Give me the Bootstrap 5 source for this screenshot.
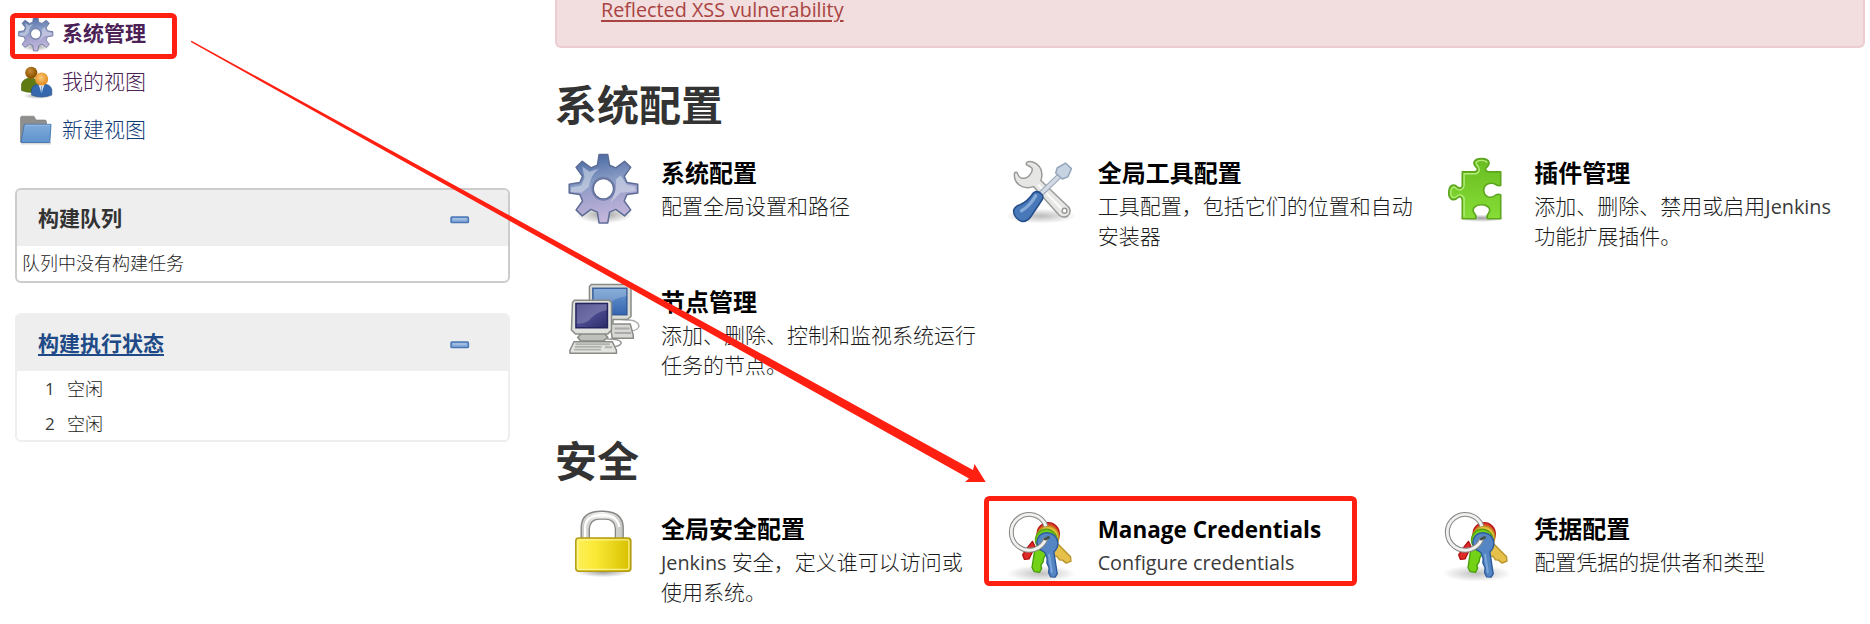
<!DOCTYPE html>
<html lang="zh-CN">
<head>
<meta charset="utf-8">
<title>系统管理 [Jenkins]</title>
<meta name="viewport" content="width=device-width, initial-scale=1">
<link rel="stylesheet" href="https://cdn.jsdelivr.net/npm/bootstrap@5.3.0/dist/css/bootstrap.min.css">
<script src="https://cdn.jsdelivr.net/npm/bootstrap@5.3.0/dist/js/bootstrap.bundle.min.js"></script>
<style>
body{font-family:"Noto Sans CJK SC",sans-serif;font-size:21px;font-weight:300;color:#1c1c1c;height:624px;background:#fff}
.latin{font-family:"Open Sans","Noto Sans",sans-serif;font-weight:400;font-size:19.8px;line-height:1;color:#3a3a3a}
.side-col{width:510px;padding:10px 0 0 15px}
.task-item{height:48px;line-height:40px;padding-left:3px;gap:8px;color:#4a2055;text-decoration:none}
.task-item svg{width:36px;height:36px}
.task-item.fresh{color:#0f3a78}
.pane{border:2px solid #eee;border-radius:6px;overflow:hidden;font-size:18px}
.pane.queue{border-color:#ccc;margin-top:34px;height:95px}
.pane.execs{margin-top:30px;height:129px}
.pane-head{background:#eee;height:56px;padding:0 38px 0 21px;font-size:21px;font-weight:700;color:#333}
.pane-head a{color:#204a87;text-underline-offset:3px;text-decoration-thickness:2px}
.pane-head svg{margin-top:4px}
.empty-row{padding-left:5px;line-height:33px}
.exec-row{line-height:35px;height:35px;padding-left:28px}
.exec-row .num{width:22px;font-size:17px;line-height:35px}
.main-col{padding:0 5px 0 45px}
.warn-box{height:48px;background:#f2dede;border:2px solid #ebccd1;border-top:0;border-radius:0 0 6px 6px;padding-left:44px;line-height:16px}
.warn-box a{color:#a94442;text-underline-offset:3px;text-decoration-thickness:2px}
.sec-title{font-size:42px;font-weight:700;line-height:50px;margin:30px 0 26px;color:#333}
.sec-title.second{margin-top:55px}
.tool-grid{display:grid;grid-template-columns:repeat(3,1fr);row-gap:33px}
.tool{gap:21px;padding:0 6px 0 13px}
.tool svg{width:72px;height:72px;margin-top:-1px}
.tool dt{font-size:24px;line-height:36px;color:#000;font-weight:700}
.tool dt .latin{font-weight:700;font-size:22.500px;color:#000}
.tool dd{line-height:30px;margin:0}
.marks{left:0;top:0;pointer-events:none}
</style>
</head>
<body class="position-relative overflow-hidden">
<svg width="0" height="0" class="position-absolute">
<defs>
<linearGradient id="gearG" x1="0.4" y1="0" x2="0.6" y2="1"><stop offset="0" stop-color="#4a6aa2"/><stop offset=".4" stop-color="#8a9dc6"/><stop offset=".6" stop-color="#a3a3cd"/><stop offset="1" stop-color="#c8b9dd"/></linearGradient>
<radialGradient id="shadeG"><stop offset="0" stop-color="#000" stop-opacity=".38"/><stop offset="1" stop-color="#000" stop-opacity="0"/></radialGradient>
<linearGradient id="lockG" x1="0" x2="1"><stop offset="0" stop-color="#fff05a"/><stop offset=".35" stop-color="#fae936"/><stop offset="1" stop-color="#d8c000"/></linearGradient>
<linearGradient id="puzG" x1="0" y1="0" x2="0" y2="1"><stop offset="0" stop-color="#69bd22"/><stop offset="1" stop-color="#86dd35"/></linearGradient>
<linearGradient id="metalG" x1="0" x2="1"><stop offset="0" stop-color="#c9cac7"/><stop offset=".5" stop-color="#f4f4f3"/><stop offset="1" stop-color="#c3c5c1"/></linearGradient>
<linearGradient id="navyG" x1="0" y1="0" x2="1" y2="1"><stop offset="0" stop-color="#34347c"/><stop offset=".5" stop-color="#4c4a90"/><stop offset="1" stop-color="#2b2b68"/></linearGradient>
<linearGradient id="skyG" x1="0" y1="0" x2="0" y2="1"><stop offset="0" stop-color="#6c9ad0"/><stop offset="1" stop-color="#3565b0"/></linearGradient>
<linearGradient id="foldG" x1="0" y1="0" x2="0" y2="1"><stop offset="0" stop-color="#7fabdb"/><stop offset="1" stop-color="#5e93cd"/></linearGradient>
<radialGradient id="headA" cx=".4" cy=".35"><stop offset="0" stop-color="#c98b3c"/><stop offset="1" stop-color="#8f5902"/></radialGradient>
<radialGradient id="headB" cx=".45" cy=".4"><stop offset="0" stop-color="#f9c978"/><stop offset="1" stop-color="#e5932a"/></radialGradient>

<symbol id="i-gear" viewBox="0 0 48 48">
<ellipse cx="24" cy="41" rx="19" ry="6" fill="url(#shadeG)"/>
<path fill="url(#gearG)" stroke="#5d6c96" stroke-width="1" stroke-linejoin="round" fill-rule="evenodd" d="M20.7 1h5.8l1.2 7.2 4.2 1.7 5.8-4.3 4.1 4-4.3 5.9 1.8 4.2 7.2 1.1v5.8l-7.2 1.1-1.8 4.3 4.3 5.9-4.1 4-5.8-4.3-4.2 1.8-1.2 7.2h-5.8l-1.1-7.2-4.3-1.8-5.8 4.3-4.1-4 4.3-5.9-1.8-4.3-7.1-1.1v-5.8l7.1-1.1 1.8-4.2-4.3-5.9 4.1-4 5.8 4.3 4.3-1.7zM23.6 17a6.8 6.8 0 1 0 0 13.600 6.8 6.8 0 1 0 0-13.600z"/>
<path fill="#dfe6f0" opacity=".5" d="M9.500 9l5 3.500q3-1.500 6-2-6 5-6.500 12l-5 4-7-.500v-3l7-1.500 2-5zM35 15l4 6 6 1.500v3l-10 1-7 7q5-8 4-16z"/>
<circle cx="23.600" cy="23.800" r="7.500" fill="none" stroke="#7180aa" stroke-width=".9"/>
</symbol>

<symbol id="i-tools" viewBox="0 0 48 48">
<ellipse cx="24" cy="42" rx="24" ry="5" fill="url(#shadeG)" opacity=".7"/>
<path fill="#e6e7e5" stroke="#999b98" stroke-width="1" stroke-linejoin="round" d="M14.300 7.800Q13.600 5.600 17 5.700Q22 6.500 24 11Q25.200 15 23.900 18.300L42.700 36.300Q44.500 40 41.500 42.200Q38.600 43.600 36 41.300L19 22.400Q15 23.800 11.400 22.400Q6.700 20.300 6.300 15.700Q5.900 12 8 13Q9.500 16.700 11.400 16.900Q14.500 17 16.500 14.600Q18.700 12 18 10.200Q16.500 8.600 14.300 7.800z"/>
<path d="M22 21l17 17.500" stroke="#fff" stroke-width="1.500" opacity=".8"/>
<circle cx="39.700" cy="38.500" r="1.600" fill="#fff" stroke="#999b98"/>
<path d="M36 15.500L22.500 28.500" stroke="#98a4b8" stroke-width="3.800"/><path d="M36 15.500L22.500 28.500" stroke="#d2dae5" stroke-width="2.400"/>
<path fill="#c6d4e2" stroke="#94a5bb" stroke-linejoin="round" d="M33.800 13.300L34.800 10L40.300 6.700L44.300 10.400L41.900 15.900L38.200 17.300z"/>
<path fill="#4878b7" stroke="#244d89" stroke-linejoin="round" d="M19 26.500Q21.500 24.800 24 27Q26 28.600 24.900 31L17.500 42Q15 46 11 45.600Q6 43.500 5.700 38.500Q6.300 35.500 10 34.500Q15 32.500 19 26.500z"/>
<path d="M20.500 28.500Q17 35 11 38.500" stroke="#86abd8" stroke-width="2.200" fill="none" stroke-linecap="round"/>
</symbol>

<symbol id="i-puzzle" viewBox="0 0 48 48">
<ellipse cx="27" cy="43.500" rx="16" ry="2.500" fill="url(#shadeG)"/>
<path fill="url(#puzG)" stroke="#5ea61f" stroke-width="1.100" stroke-linejoin="round" d="M14.200 12.600H22.500Q25 12 24 10Q21.600 8 22 6.200Q23 3.700 27 3.800Q31 3.700 32 6.200Q32.200 8 30 10Q29 12 31.500 12.600H39.800V21.500Q38.500 22.400 36.500 21Q34 19.500 31 20.700Q28.500 22 28.500 25Q28.500 28 31.500 29.300Q34.500 30 36.500 28Q38.500 27 39.800 28V43.800H31Q30 42.500 31.500 40.500Q33.500 38 31.500 36Q29.500 34.400 27 34.500Q24 34.400 22.200 36.200Q20.500 38.500 22.500 40.500Q24 42.500 23 43.800H14.200V31.500Q13.500 28 11.500 29.500Q9.500 31.800 7 30.800Q5 29.500 5.200 26Q5.300 22.500 7.500 21.500Q9.500 21 11 22.800Q13.300 24.400 14.200 22z"/>
<path fill="none" stroke="#b5ed79" stroke-width=".9" d="M15.400 42.500V30Q13 26.500 10.500 29Q8 30.500 6.700 28.500Q6 24 8 22.700Q9 22.500 10.500 24Q14 26 15.400 22V13.800H23.500Q26.500 12.500 25 9.300Q23 7 23.500 6Q25 4.800 27 4.900Q30 5 30.800 6.500"/>
</symbol>

<symbol id="i-nodes" viewBox="0 0 48 48">
<path d="M36 25q11 0 11.300 4.500q-.5 3-6 3" fill="none" stroke="#aaa" stroke-width="1"/>
<path d="M26 38q9 0 9.500 2.500q-.5 2-4 2.500" fill="none" stroke="#999" stroke-width="1"/>
<path fill="#d7d8d3" stroke="#8a8b86" d="M28 28h13.500l2 7.500v2h-14z"/>
<path stroke="#aaa" stroke-width="1.200" d="M31 31h10M31 34h11"/>
<path fill="#dadbd7" stroke="#888a85" stroke-linejoin="round" d="M15.500 1.700H40.800L42 3V23L39.500 25H30V27H18L14.300 23V3z"/>
<rect x="16.600" y="4.200" width="22.600" height="17.600" fill="url(#skyG)" stroke="#315b9a"/>
<path fill="#fff" opacity=".2" d="M17 4.500h22v5q-9 1-13 7h-9z"/>
<path fill="#bfc0bb" stroke="#888a85" d="M9 34h15l2.500 3-3 2.300H8.500L6.500 37z"/>
<path fill="#e1e2de" stroke="#888a85" stroke-linejoin="round" d="M4.300 12.200H27.500L29 13.700V32L26.500 34.700H5L2.300 32L3 13.700z"/>
<rect x="5.300" y="14.300" width="21" height="16.200" fill="url(#navyG)" stroke="#25255e"/>
<path fill="#fff" opacity=".2" d="M5.800 14.800h20v4q-7 1-12 7-3 2-8 2z"/>
<path fill="#e3e4e0" stroke="#888a85" stroke-linejoin="round" d="M4 39.800H29.500L32.300 45.500V47.500H1.300V45.500z"/>
<path stroke="#b1b3ae" stroke-width="1.200" d="M5 41.500h23M4.500 43.300h18M4 45.100h18M24.500 43.500h5"/>
</symbol>

<symbol id="i-lock" viewBox="0 0 48 48">
<ellipse cx="23.500" cy="42" rx="18" ry="3.500" fill="url(#shadeG)"/>
<path fill="url(#metalG)" stroke="#858783" stroke-width=".9" d="M8.800 21V11.500Q9.500 1.500 22 1.500H24Q36 2 36.800 11.500V21H31.600V13Q31 6.800 25 6.700H20.500Q14.700 7 14.200 13V21z"/>
<path d="M11.400 20V12Q12 4.200 22 4.100H24Q33 4.500 34.200 12" stroke="#fff" stroke-width="1.500" fill="none"/>
<rect x="5.200" y="19.300" width="36.700" height="22.200" rx="2" fill="url(#lockG)" stroke="#b39b13"/>
<rect x="6.500" y="20.600" width="34.100" height="19.600" rx="1" fill="none" stroke="#fff7a0" stroke-width=".9" opacity=".8"/>
</symbol>

<symbol id="i-keys" viewBox="0 0 48 48">
<ellipse cx="24" cy="43" rx="23" ry="5.500" fill="url(#shadeG)" opacity=".65"/>
<g stroke-linejoin="round" stroke-width=".9">
<path fill="#e02a2a" stroke="#b01010" d="M20 25l-4 8.300-3 .300-1.200-3 2.500-4 4-5z"/>
<circle cx="28.800" cy="16.500" r="7.400" fill="#e0402a" stroke="#b81818"/>
<path fill="#e5c04a" stroke="#b8932b" d="M34 22l9.700 9.800.3 3-3.200 1.300-2.500-2-2-.2-1.500-2.200-2-.5-2-2.500z"/>
<circle cx="28.600" cy="18.600" r="7.300" fill="#e5bf3c" stroke="#c08a20"/>
<path fill="#73d216" stroke="#479c0c" d="M20 26l-2 13 1.500 2.800 3.600.4 1.300-2.700-.5-2 1.500-2.200.4-2.500 2-4z"/>
<circle cx="27.500" cy="20.700" r="7.200" fill="#73d216" stroke="#5ba212"/>
<path fill="#5586c4" stroke="#2b599c" d="M28 15.700q6.500.500 7.300 7 0 3.500-2.700 6l2.200 14.500-1.400 2.200-3-.2-1.300-2.800.3-3.200-1.500-3.200.2-3-1.500-4q-5-2.500-5.400-6.500 .5-6.500 6.800-6.800z"/>
<path d="M29.300 30l2 12.500" stroke="#7da7db" stroke-width="1.300"/>
</g>
<path id="ringp" d="M27.300 11.500A11.900 11.900 0 1 0 27.400 19.300" fill="none" stroke="#868886" stroke-width="3.300"/>
<path d="M27.300 11.500A11.900 11.900 0 1 0 27.400 19.300" fill="none" stroke="#f0f0ef" stroke-width="1.900"/>
<path d="M26.800 20l2.200-1" stroke="#45524a" stroke-width="2" stroke-linecap="round"/>
</symbol>

<symbol id="i-people" viewBox="0 0 36 36">
<ellipse cx="20" cy="32" rx="15" ry="3" fill="url(#shadeG)"/>
<path fill="#5f7a10" stroke="#46600a" stroke-width=".6" d="M3.500 26.500V20q1.500-5.500 9-6 8 .5 9 7v6q-9 3-18-.5z"/>
<circle cx="13.300" cy="8.800" r="6.100" fill="url(#headA)"/>
<path fill="#3668ad" stroke="#234d8a" stroke-width=".6" d="M13.500 31V25q1.500-5 10-5.500 9 .5 10.300 6V31q-10 4-20.300 0z"/>
<path fill="#fff" d="M20.500 20h6l-3 9z"/><path stroke="#7aa3d7" stroke-width="1.500" d="M23.500 22v6"/>
<circle cx="23.600" cy="15" r="6.600" fill="url(#headB)"/>
</symbol>

<symbol id="i-folder" viewBox="0 0 36 36">
<rect x="3" y="30" width="30" height="2.500" fill="#000" opacity=".15"/>
<path fill="#8f908d" stroke="#777" stroke-width=".6" d="M2.500 30V5.500l1-1.300H16l2 3.800h9q1.500.200 1.500 2V29z"/>
<path fill="url(#foldG)" stroke="#4274b0" stroke-width=".9" stroke-linejoin="round" d="M6.300 12.300H33L31.800 30.500H3z"/>
<path fill="none" stroke="#a9c7ea" stroke-width=".7" d="M7 13.200H32"/>
</symbol>

<symbol id="i-minus" viewBox="0 0 20 8"><rect x="1" y="1" width="17.400" height="5.600" rx=".9" fill="#87abd9" stroke="#4a77b5" stroke-width="1.500"/><path d="M3 3h13.500" stroke="#b7cdea" stroke-width="1"/></symbol>
</defs>
</svg>

<div class="d-flex">
<aside class="side-col flex-shrink-0">
<nav class="d-flex flex-column">
<a href="#" class="task-item d-flex align-items-center fw-bold"><svg><use href="#i-gear"/></svg><span class="mb-1">系统管理</span></a>
<a href="#" class="task-item d-flex align-items-center"><svg><use href="#i-people"/></svg><span class="mb-1">我的视图</span></a>
<a href="#" class="task-item fresh d-flex align-items-center"><svg><use href="#i-folder"/></svg><span class="mb-1">新建视图</span></a>
</nav>
<section class="pane queue">
<div class="pane-head d-flex align-items-center justify-content-between">构建队列<svg width="20" height="8"><use href="#i-minus"/></svg></div>
<div class="empty-row">队列中没有构建任务</div>
</section>
<section class="pane execs">
<div class="pane-head d-flex align-items-center justify-content-between"><a href="#">构建执行状态</a><svg width="20" height="8"><use href="#i-minus"/></svg></div>
<div class="exec-row d-flex"><span class="num latin">1</span>空闲</div>
<div class="exec-row d-flex"><span class="num latin">2</span>空闲</div>
</section>
</aside>

<main class="main-col flex-grow-1">
<div class="warn-box"><a href="#" class="latin">Reflected XSS vulnerability</a></div>
<h1 class="sec-title">系统配置</h1>
<div class="tool-grid">
<div class="tool d-flex"><svg class="flex-shrink-0"><use href="#i-gear"/></svg><dl class="m-0"><dt>系统配置</dt><dd>配置全局设置和路径</dd></dl></div>
<div class="tool d-flex"><svg class="flex-shrink-0"><use href="#i-tools"/></svg><dl class="m-0"><dt>全局工具配置</dt><dd>工具配置，包括它们的位置和自动安装器</dd></dl></div>
<div class="tool d-flex"><svg class="flex-shrink-0"><use href="#i-puzzle"/></svg><dl class="m-0"><dt>插件管理</dt><dd>添加、删除、禁用或启用<span class="latin">Jenkins</span><br>功能扩展插件。</dd></dl></div>
<div class="tool d-flex"><svg class="flex-shrink-0"><use href="#i-nodes"/></svg><dl class="m-0"><dt>节点管理</dt><dd>添加、删除、控制和监视系统运行任务的节点。</dd></dl></div>
</div>
<h1 class="sec-title second">安全</h1>
<div class="tool-grid">
<div class="tool d-flex"><svg class="flex-shrink-0"><use href="#i-lock"/></svg><dl class="m-0"><dt>全局安全配置</dt><dd><span class="latin">Jenkins </span>安全，定义谁可以访问或<br>使用系统。</dd></dl></div>
<div class="tool d-flex"><svg class="flex-shrink-0"><use href="#i-keys"/></svg><dl class="m-0"><dt><span class="latin">Manage Credentials</span></dt><dd><span class="latin">Configure credentials</span></dd></dl></div>
<div class="tool d-flex"><svg class="flex-shrink-0"><use href="#i-keys"/></svg><dl class="m-0"><dt>凭据配置</dt><dd>配置凭据的提供者和类型</dd></dl></div>
</div>
</main>
</div>

<!-- red annotations over the page -->
<svg class="marks position-absolute" width="1870" height="624" viewBox="0 0 1870 624">
<g fill="none" stroke="#ff2012" stroke-width="5"><rect x="12.500" y="15.500" width="162" height="41" rx="3"/><rect x="986.500" y="498.500" width="368" height="85" rx="3"/></g>
<path fill="#ff2012" d="M191.500 40.700L973 470L974.500 464L985.700 482H965L969 478.500L190.800 42z"/>
</svg>
</body>
</html>
